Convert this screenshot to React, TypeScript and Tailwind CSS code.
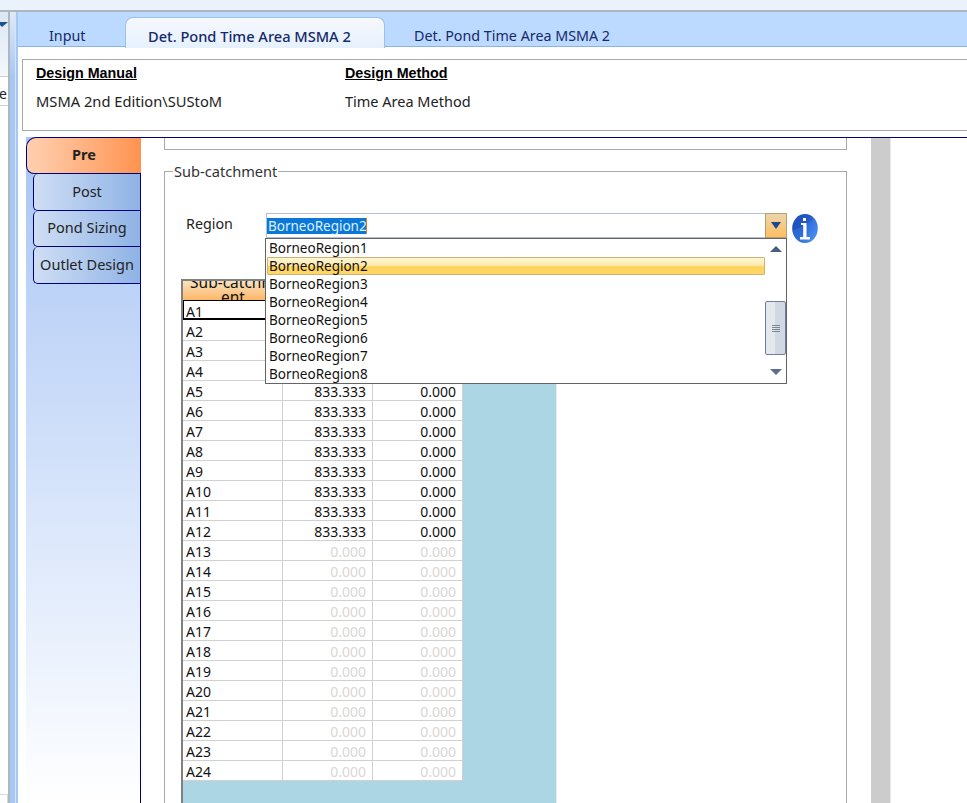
const regions = ["BorneoRegion1", "BorneoRegion2", "BorneoRegion3", "BorneoRegion4", "BorneoRegion5", "BorneoRegion6", "BorneoRegion7", "BorneoRegion8"];

const rows = Array.from({ length: 24 }, (_, i) => ({
	name: `A${i + 1}`,
	area: i < 12 ? "833.333" : "0.000",
	value: "0.000",
	muted: i >= 12,
}));

function InfoIcon() {
	return (
		<svg width="26" height="29" viewBox="0 0 26 29" className="mt-px ml-[5px] shrink-0">
			<defs>
				<linearGradient id="info" x1="0" y1="0" x2="1" y2="0.7">
					<stop offset="0" stopColor="#1d4db8" />
					<stop offset="0.5" stopColor="#2459c6" />
					<stop offset="1" stopColor="#4f94f2" />
				</linearGradient>
			</defs>
			<ellipse cx="13" cy="14.5" rx="12.8" ry="14.4" fill="url(#info)" />
			<path d="M0.5 16 C8 15 16 10 23 4 C26 9 26 20 22 25 C17 30 8 30 4 25 C2 22 1 19 0.5 16z" fill="#3f86ee" opacity="0.35" />
			<rect x="11" y="4" width="3" height="3" fill="#fff" />
			<path d="M9 9h5.5v14h3.5v2.5H8V23h3.2V11H9z" fill="#fff" />
		</svg>
	);
}

function ScrollArrow({ up }: { up?: boolean }) {
	return (
		<svg width="12" height="6" viewBox="0 0 12 6" className="mx-auto block">
			<polygon points={up ? "6,0 12,6 0,6" : "0,0 12,0 6,6"} fill={up ? "#4b5b80" : "#5f6f94"} />
		</svg>
	);
}

function SideTab({ label, tall = true }: { label: string; tall?: boolean }) {
	return (
		<div className={`ml-[7px] flex items-center justify-center rounded-l-[5px] border-b border-l border-[#00007f] bg-gradient-to-r from-[#cfdef4] to-[#8fb3e5] pb-px text-[14.5px] text-[#222] ${tall ? "h-[37px]" : "h-[36px]"}`}>
			{label}
		</div>
	);
}

function RegionDropdown() {
	return (
		<div className="absolute top-[24px] -left-[2px] z-10 flex h-[146px] w-[522px] border border-[#646464] bg-white text-[13.5px] leading-[18px] text-[#111]">
			<div className="flex-1">
				{regions.map((r) => (
					<div
						key={r}
						className={
							r === "BorneoRegion2"
								? "ml-px h-[18px] rounded-[1px] border border-[#c9b272] bg-[linear-gradient(to_bottom,#fff6d6,#ffe8a8_50%,#ffd35f_50%,#ffd766)] pl-px leading-[16px]"
								: "h-[18px] pl-[3px]"
						}
					>
						{r}
					</div>
				))}
			</div>
			<div className="w-[21px] pt-[7px]">
				<ScrollArrow up />
				<div className="mt-[49px] flex h-[54px] items-center justify-center rounded-[2px] border border-[#6c7da0] bg-gradient-to-r from-[#e4e8ed] from-50% to-[#cfd8e3] to-50%">
					<div className="flex w-[8px] flex-col gap-px">
						<div className="h-px bg-[#7c8796]" />
						<div className="h-px bg-[#7c8796]" />
						<div className="h-px bg-[#7c8796]" />
						<div className="h-px bg-[#7c8796]" />
					</div>
				</div>
				<div className="mt-[14px]">
					<ScrollArrow />
				</div>
			</div>
		</div>
	);
}

function CatchmentGrid() {
	return (
		<div className="h-[600px] w-[376px] border-t-2 border-r border-l-2 border-[#808080] border-r-[#e6f0f4] bg-[#add6e5] text-[14px] text-[#111]">
			<div className="grid h-[20px] w-[280px] grid-cols-[100px_90px_90px] bg-gradient-to-b from-[#f7e3bd] to-[#fdb360]">
				<div className="h-[20px] overflow-hidden text-center text-[15.5px] leading-[15px]">
					<div className="-mt-[6px] px-[4px]">
						Sub-catchm
						<wbr />
						ent
					</div>
				</div>
				<div />
				<div />
			</div>
			<div className="grid w-[280px] grid-cols-[100px_90px_90px] bg-white">
				{rows.map((row, i) => (
					<div key={row.name} className="contents">
						<div
							className={
								i === 0
									? "-mt-px h-[20px] border-t border-b-2 border-l border-black pl-[2px] leading-[21px]"
									: "h-[20px] border-r border-b border-[#d0d0d0] pl-[3px] leading-[21px]"
							}
						>
							{row.name}
						</div>
						<div className={`h-[20px] border-r border-b border-[#d0d0d0] pr-[6px] text-right leading-[21px] ${row.muted ? "text-[#d9d6d3]" : ""}`}>{row.area}</div>
						<div className={`h-[20px] border-r border-b border-[#d0d0d0] pr-[6px] text-right leading-[21px] ${row.muted ? "text-[#d9d6d3]" : ""}`}>{row.value}</div>
					</div>
				))}
			</div>
		</div>
	);
}

export default function App() {
	return (
		<div className="h-[803px] w-[967px] overflow-hidden bg-white font-['Noto_Sans',sans-serif]">
			<div className="h-[10px] bg-[#ebf2fb]" />
			<div className="h-[2px] bg-[#b0b6bd]" />
			<div className="flex h-[791px]">
				{/* docked panel cut off on the left */}
				<div className="flex w-[8px] flex-col">
					<div className="h-[64px] bg-gradient-to-b from-[#dbe7f4] to-[#f4f7fb] pt-[10px]">
						<svg width="8" height="5" viewBox="0 0 8 5" className="block">
							<polygon points="0,0 8,0 2,5 0,3" fill="#1f4f8f" />
						</svg>
					</div>
					<div className="h-[30px] border-t border-b border-[#cfcfcf] text-[14px] leading-[34px] text-[#222]">
						<span className="-ml-[1px]">e</span>
					</div>
					<div className="flex-1" />
					<div className="h-[9px] border-t border-r border-[#d8d8d8]" />
				</div>
				<div className="w-[2px] bg-[#b0b6bd]" />
				<div className="w-[5px] bg-gradient-to-b from-[#dfeaf7] to-[#a8c8f4] to-[8%]" />
				<div className="w-px bg-[#d5e4f8]" />
				<div className="w-[2px] bg-[#a8c8f4]" />

				<div className="flex min-w-0 flex-1 flex-col">
					<div className="flex h-[35px] border-b border-[#8db2e3] bg-[#bcdaff] text-[14.3px] text-[#15296b]">
						<div className="w-[107px] pt-[14px] pl-[31px] leading-[20px]">Input</div>
						<div className="mt-[5px] -mb-px h-[31px] w-[260px] rounded-t-[8px] border-x border-t border-[#9cc0ee] bg-gradient-to-b from-[#f6f9fd] to-[#e6f1fe] pt-[8px] pl-[22px] text-[14.6px] leading-[20px] font-medium">
							Det. Pond Time Area MSMA 2
						</div>
						<div className="pt-[14px] pl-[29px] leading-[20px]">Det. Pond Time Area MSMA 2</div>
					</div>

					<div className="mt-[12px] ml-[4px] flex h-[72px] border-y border-l border-[#a9a9a9] pt-[5px] pl-[13px]">
						<div className="w-[309px]">
							<div className="font-['Liberation_Sans',sans-serif] text-[14.3px] leading-[16px] font-bold text-black underline">Design Manual</div>
							<div className="mt-[10px] text-[14.7px] leading-[20px] text-[#222]">MSMA 2nd Edition\SUStoM</div>
						</div>
						<div>
							<div className="font-['Liberation_Sans',sans-serif] text-[14.3px] leading-[16px] font-bold text-black underline">Design Method</div>
							<div className="mt-[10px] text-[14.5px] leading-[20px] text-[#222]">Time Area Method</div>
						</div>
					</div>

					<div className="mt-[6px] flex min-h-0 flex-1 pl-[8px]">
						<div className="w-[115px] shrink-0 border-r border-[#00007f] bg-gradient-to-b from-[#a9c5f4] to-white">
							<div className="-mr-px flex h-[37px] items-center justify-center rounded-tl-[10px] rounded-bl-[8px] border-y border-l border-[#00007f] bg-gradient-to-r from-[#ffd0b0] to-[#ff934e] pb-[2px] text-[14.5px] font-bold text-[#222]">
								Pre
							</div>
							<SideTab label="Post" />
							<SideTab label="Pond Sizing" tall={false} />
							<SideTab label="Outlet Design" />
						</div>

						<div className="flex min-w-0 flex-1 border-t border-[#00007f]">
							<div className="w-[730px] shrink-0 pl-[23px]">
								<div className="h-[12px] w-[683px] border-x border-b border-[#a9a9a9]" />
								<fieldset className="mt-[11px] h-[700px] w-[683px] border border-[#a9a9a9] pl-[16px]">
									<legend className="-ml-[8px] h-[20px] px-px text-[14.6px] leading-[20px] text-[#333]">Sub-catchment</legend>
									<div className="mt-[32px] flex pl-[5px]">
										<div className="w-[80px] pt-[1px] text-[14.3px] leading-[20px] text-[#222]">Region</div>
										<div className="relative flex h-[25px] w-[521px] border-y border-l border-[#b4c0d4]">
											<div className="flex-1 pt-[4px]">
												<span className="block h-[16px] w-[100px] border-r border-[#e07a20] bg-[#0b78d7] pl-px text-[13.5px] leading-[16px] text-[#dff0ff]">BorneoRegion2</span>
											</div>
											<div className="-mt-px flex h-[25px] w-[22px] items-center justify-center border border-[#b3a171] bg-gradient-to-b from-[#ecd5a8] to-[#ffbd60]">
												<svg width="10" height="8" viewBox="0 0 10 8">
													<polygon points="0,0 10,0 5,7" fill="#1c4a8c" />
												</svg>
											</div>
											<RegionDropdown />
										</div>
										<InfoIcon />
									</div>
									<div className="mt-[36px]">
										<CatchmentGrid />
									</div>
								</fieldset>
							</div>
							<div className="w-[19px] bg-[#cccccc]" />
							<div className="w-px bg-[#e8e8e8]" />
						</div>
					</div>
				</div>
			</div>
		</div>
	);
}
